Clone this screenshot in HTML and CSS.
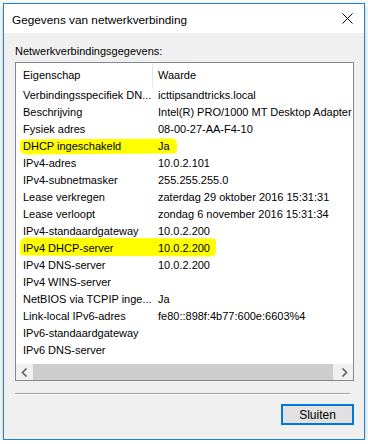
FILE: index.html
```html
<!DOCTYPE html>
<html lang="nl">
<head>
    <meta charset="UTF-8">
    <meta name="viewport" content="width=device-width, initial-scale=1.0">
    <title>Gegevens van netwerkverbinding</title>
    <link rel="stylesheet" href="styles.css">
</head>
<body>

<div class="window">
    <div class="titlebar">
        <span class="title">Gegevens van netwerkverbinding</span>
        <svg class="close" width="11" height="11" viewBox="0 0 11 11">
            <path d="M0.5 0.5 L10.5 10.5 M10.5 0.5 L0.5 10.5" stroke="#000" stroke-width="1" fill="none"/>
        </svg>
    </div>

    <div class="content">
        <div class="label">Netwerkverbindingsgegevens:</div>

        <div class="list">
            <div class="list-head">
                <div class="col1">Eigenschap</div>
                <div class="col2 head-sep">Waarde</div>
            </div>
            <div class="rows">
                <div class="row"><div class="col1">Verbindingsspecifiek DN...</div><div class="col2">icttipsandtricks.local</div></div>
                <div class="row"><div class="col1">Beschrijving</div><div class="col2">Intel(R) PRO/1000 MT Desktop Adapter</div></div>
                <div class="row"><div class="col1">Fysiek adres</div><div class="col2">08-00-27-AA-F4-10</div></div>
                <div class="row"><span class="marker marker-one"></span><div class="col1">DHCP ingeschakeld</div><div class="col2">Ja</div></div>
                <div class="row"><div class="col1">IPv4-adres</div><div class="col2">10.0.2.101</div></div>
                <div class="row"><div class="col1">IPv4-subnetmasker</div><div class="col2">255.255.255.0</div></div>
                <div class="row"><div class="col1">Lease verkregen</div><div class="col2">zaterdag 29 oktober 2016 15:31:31</div></div>
                <div class="row"><div class="col1">Lease verloopt</div><div class="col2">zondag 6 november 2016 15:31:34</div></div>
                <div class="row"><div class="col1">IPv4-standaardgateway</div><div class="col2">10.0.2.200</div></div>
                <div class="row"><span class="marker marker-two"></span><div class="col1">IPv4 DHCP-server</div><div class="col2">10.0.2.200</div></div>
                <div class="row"><div class="col1">IPv4 DNS-server</div><div class="col2">10.0.2.200</div></div>
                <div class="row"><div class="col1">IPv4 WINS-server</div><div class="col2"></div></div>
                <div class="row"><div class="col1">NetBIOS via TCPIP inge...</div><div class="col2">Ja</div></div>
                <div class="row"><div class="col1">Link-local IPv6-adres</div><div class="col2">fe80::898f:4b77:600e:6603%4</div></div>
                <div class="row"><div class="col1">IPv6-standaardgateway</div><div class="col2"></div></div>
                <div class="row"><div class="col1">IPv6 DNS-server</div><div class="col2"></div></div>
            </div>
            <div class="hscroll">
                <div class="arrow">
                    <svg width="7" height="9" viewBox="0 0 7 9"><path d="M5.5 0.5 L1.5 4.5 L5.5 8.5" stroke="#606060" stroke-width="1.6" fill="none"/></svg>
                </div>
                <div class="thumb"></div>
                <div class="arrow right">
                    <svg width="7" height="9" viewBox="0 0 7 9"><path d="M1.5 0.5 L5.5 4.5 L1.5 8.5" stroke="#606060" stroke-width="1.6" fill="none"/></svg>
                </div>
            </div>
        </div>

        <div class="separator"></div>

        <div class="actions">
            <button class="btn">Sluiten</button>
        </div>
    </div>
</div>

</body>
</html>
```

FILE: styles.css
```css
body {
    margin: 0;
    background-color: #ffffff;
    font-family: "Liberation Sans", Arial, sans-serif;
    color: #000;
}
.window {
    margin: 3px 0 0 3px;
    width: 360px;
    height: 435px;
    border: 1px solid #1883d7;
    background-color: #f0f0f0;
    box-shadow: 0 2px 6px rgba(0, 0, 0, 0.25);
    display: flex;
    flex-direction: column;
}
.titlebar {
    height: 29px;
    background: #fff;
    display: flex;
    align-items: center;
    justify-content: space-between;
    padding: 0 11px 0 8px;
    flex-shrink: 0;
}
.title {
    font-size: 11.8px;
    position: relative;
    top: 1px;
}
.close {
    display: block;
}
.content {
    padding: 10px 10px 0 11px;
}
.label {
    font-size: 11px;
    height: 16px;
    line-height: 16px;
    margin-bottom: 3px;
}
.list {
    width: 337px;
    height: 317px;
    border: 1px solid #828790;
    background: #fff;
    display: flex;
    flex-direction: column;
    font-size: 11px;
}
.list-head {
    height: 24px;
    display: flex;
    align-items: center;
    flex-shrink: 0;
}
.col1 {
    width: 129px;
    padding-left: 7px;
    white-space: nowrap;
    overflow: hidden;
}
.col2 {
    padding-left: 6px;
    white-space: nowrap;
}
.head-sep {
    height: 24px;
    line-height: 24px;
    border-left: 1px solid #e5e5e5;
    padding-left: 5px;
}
.rows {
    flex: 1;
}
.row {
    position: relative;
    height: 17px;
    line-height: 17px;
    display: flex;
}
.row .col1,
.row .col2 {
    position: relative;
    z-index: 1;
}
.marker {
    position: absolute;
    background: #ffff00;
    z-index: 0;
}
.marker-one {
    left: 4px;
    top: 1px;
    width: 157px;
    height: 15px;
    border-radius: 3px 5px 4px 6px;
    transform: rotate(-0.4deg);
}
.marker-two {
    left: 4px;
    top: -2px;
    width: 196px;
    height: 18px;
    border-radius: 6px 3px 5px 3px;
    transform: rotate(0.3deg);
}
.hscroll {
    height: 16px;
    display: flex;
    background: #f0f0f0;
    flex-shrink: 0;
}
.arrow {
    width: 17px;
    display: flex;
    align-items: center;
    justify-content: center;
}
.arrow.right {
    margin-left: 3px;
}
.thumb {
    width: 300px;
    background: #cdcdcd;
}
.separator {
    margin-top: 12px;
    width: 335px;
    height: 1px;
    background: #a0a0a0;
    border-bottom: 1px solid #fff;
}
.actions {
    display: flex;
    justify-content: flex-end;
    padding-top: 9px;
}
.btn {
    width: 73px;
    height: 21px;
    padding: 0;
    background: #e1e1e1;
    border: 2px solid #0078d7;
    font-family: "Liberation Sans", Arial, sans-serif;
    font-size: 12px;
    color: #000;
}
```
